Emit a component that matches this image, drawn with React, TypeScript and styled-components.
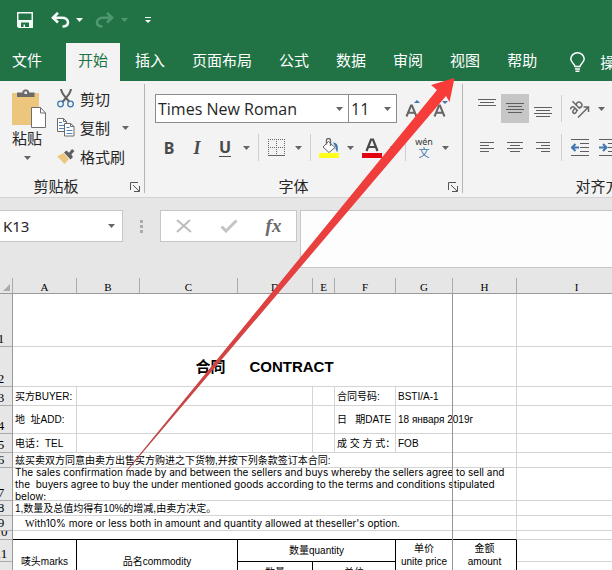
import React from "react";
import styled, { createGlobalStyle, css } from "styled-components";

const GlobalStyle = createGlobalStyle`
  *, *::before, *::after { box-sizing: border-box; }
  body { margin: 0; background: #fff; }
  button, select, input, textarea { font: inherit; color: inherit; border: 0; margin: 0; padding: 0; background: none; border-radius: 0; }
`;

const uiFont = `"Noto Sans", "Noto Sans CJK SC", sans-serif`;
const sheetFont = `"Liberation Sans", "Noto Sans CJK SC", sans-serif`;

const Window = styled.div`
  position: relative;
  display: flex;
  flex-direction: column;
  height: 100vh;
  overflow: hidden;
  background: #e6e6e6;
  font: 15px/20px ${uiFont};
  color: #262626;
`;

const TitleBar = styled.header`
  display: flex;
  align-items: center;
  flex: none;
  height: 43px;
  padding: 0 0 3px 17px;
  background: #217346;
  color: #f4fbf6;
`;

const QuickButton = styled.button<{ $space?: number; $dim?: boolean }>`
  display: flex;
  align-items: center;
  flex: none;
  margin-right: ${(p) => p.$space ?? 0}px;
  color: ${(p) => (p.$dim ? "#4f9770" : "inherit")};
`;

const TabBar = styled.nav`
  display: flex;
  flex: none;
  gap: 3px;
  height: 38px;
  background: #217346;
  white-space: nowrap;
`;

const Tab = styled.button<{ $active?: boolean; $file?: boolean }>`
  flex: none;
  padding: 0 12px 4px;
  margin-right: ${(p) => (p.$file ? 9 : 0)}px;
  color: ${(p) => (p.$active ? "#217346" : "#fff")};
  background: ${(p) => (p.$active ? "#f3f3f3" : "transparent")};
`;

const TellMe = styled.button`
  display: flex;
  align-items: center;
  flex: none;
  gap: 15px;
  padding: 0 0 0 18px;
  color: #fff;
`;

const Ribbon = styled.div`
  display: flex;
  flex: none;
  height: 117px;
  padding: 3px 0 4px;
  background: #f3f3f3;
  border-bottom: 1px solid #d2d2d2;
`;

const Group = styled.section<{ $pad: number; $width: number }>`
  display: flex;
  flex-direction: column;
  flex: none;
  width: ${(p) => p.$width}px;
  padding-left: ${(p) => p.$pad}px;
  border-right: 1px solid #b4b4b4;
`;

const GroupRows = styled.div`
  display: flex;
  flex-direction: column;
  flex: none;
  gap: 10px;
  height: 91px;
  padding-top: 10px;
`;

const ClipRows = styled.div`
  display: flex;
  flex: none;
  height: 91px;
`;

const GroupFoot = styled.footer`
  display: flex;
  align-items: center;
  flex: none;
  height: 22px;
  padding-right: 4px;
`;

const GroupName = styled.span<{ $inset?: number }>`
  flex: 1;
  padding-right: ${(p) => p.$inset ?? 0}px;
  text-align: center;
`;

const Row = styled.div<{ $gap?: number }>`
  display: flex;
  align-items: center;
  gap: ${(p) => p.$gap ?? 0}px;
  height: 29px;
`;

const PasteButton = styled.button`
  display: flex;
  flex-direction: column;
  align-items: center;
  width: 42px;
  margin-right: 9px;
  padding-top: 5px;
`;

const PasteLabel = styled.span`
  padding-bottom: 8px;
`;

const ClipColumn = styled.div`
  display: flex;
  flex-direction: column;
`;

const ClipButton = styled.button`
  display: flex;
  align-items: center;
  gap: 5px;
  height: 29px;
`;

const Caret = styled.button`
  display: flex;
  align-items: center;
  justify-content: center;
  flex: none;
  width: 15px;
  height: 29px;
`;

const Tool = styled.button<{ $on?: boolean }>`
  display: flex;
  align-items: center;
  justify-content: center;
  flex: none;
  width: 28px;
  height: 29px;
  background: ${(p) => (p.$on ? "#c6c6c6" : "transparent")};
`;

const Letter = styled.span<{ $kind: "b" | "i" | "u" }>`
  font: 700 16px/20px "Noto Sans", sans-serif;
  color: #4a4a4a;
  ${(p) => p.$kind === "i" && css`font-family: "Liberation Serif", serif; font-style: italic; font-size: 18px;`}
  ${(p) => p.$kind === "u" && css`line-height: 17px; border-bottom: 1px solid #4a4a4a;`}
`;

const Divider = styled.span`
  flex: none;
  width: 1px;
  height: 27px;
  margin: 0 4px;
  background: #cfcfcf;
`;

const ComboPair = styled.div`
  display: flex;
  flex: none;
  margin-right: 2px;
`;

const Combo = styled.label<{ $width: number }>`
  display: flex;
  align-items: center;
  flex: none;
  width: ${(p) => p.$width}px;
  height: 29px;
  padding: 0 5px 0 2px;
  border: 1px solid #8c8c8c;
  background: #fff;
  font: 16px/20px "Open Sans", sans-serif;

  & + & {
    border-left: 0;
  }
`;

const Select = styled.select`
  flex: 1;
  min-width: 0;
  appearance: none;
  outline: 0;
`;

const FormulaRow = styled.div`
  display: flex;
  align-items: flex-start;
  flex: none;
  height: 80px;
  padding-top: 12px;
`;

const NameBox = styled.label`
  display: flex;
  align-items: center;
  flex: none;
  width: 123px;
  height: 32px;
  padding: 0 7px 0 3px;
  border: 1px solid #c6c6c6;
  border-left: 0;
  background: #fff;
`;

const NameInput = styled.input`
  flex: 1;
  min-width: 0;
  outline: 0;
`;

const Grip = styled.span`
  display: flex;
  justify-content: center;
  align-items: center;
  flex: none;
  width: 37px;
  height: 32px;
`;

const FormulaTools = styled.div`
  display: flex;
  flex: none;
  width: 137px;
  height: 32px;
  margin-right: 3px;
  border: 1px solid #c6c6c6;
  background: #fff;
`;

const FormulaButton = styled.button`
  display: flex;
  flex: 1;
  align-items: center;
  justify-content: center;
`;

const FormulaInput = styled.textarea`
  flex: 1;
  min-width: 0;
  height: 58px;
  border: 1px solid #c6c6c6;
  border-right: 0;
  background: #fdfdfd;
  resize: none;
  outline: 0;
`;

const SheetArea = styled.main`
  position: relative;
  flex: 1;
  min-height: 0;
  overflow: hidden;
  background: #fff;
`;

const Sheet = styled.table`
  table-layout: fixed;
  border-collapse: separate;
  border-spacing: 0;
  width: 100%;
  min-width: 637px;
  font: 10px/13px ${sheetFont};
  color: #000;
`;

const Col = styled.col<{ $w?: number }>`
  width: ${(p) => (p.$w ? p.$w + "px" : "auto")};
`;

const ColHead = styled.th`
  height: 16px;
  padding: 3px 0 0;
  background: #e6e6e6;
  border-right: 1px solid #ababab;
  border-bottom: 1px solid #9a9a9a;
  font: 400 11px/12px "Liberation Serif", serif;
`;

const RowHead = styled.th`
  padding: 0;
  background: #e6e6e6;
  border-right: 1px solid #9a9a9a;
  border-bottom: 1px solid #ababab;
  vertical-align: bottom;
`;

const RowNumber = styled.span<{ $h: number }>`
  display: flex;
  align-items: flex-end;
  justify-content: center;
  width: 24px;
  height: ${(p) => p.$h - 1}px;
  margin-left: -11px;
  overflow: hidden;
  font: 400 13px/14px "Liberation Serif", serif;
`;

type Line = "grey" | "black";
const lineColor: Record<Line, string> = { grey: "#d4d4d4", black: "#000" };

const Cell = styled.td<{ $right?: Line; $bottom?: Line }>`
  padding: 0;
  border-right: 1px solid ${(p) => lineColor[p.$right ?? "grey"]};
  border-bottom: 1px solid ${(p) => lineColor[p.$bottom ?? "grey"]};
`;

const CellText = styled.div<{ $h: number; $center?: boolean; $prose?: boolean; $top?: boolean }>`
  display: flex;
  flex-direction: column;
  justify-content: ${(p) => (p.$top ? "flex-start" : "center")};
  height: ${(p) => p.$h - 1}px;
  padding: ${(p) => (p.$top ? 2 : 0)}px ${(p) => (p.$center ? 0 : 2)}px 0;
  overflow: hidden;
  white-space: pre;
  text-align: ${(p) => (p.$center ? "center" : "left")};
  ${(p) => p.$prose && css`font-family: Inter, sans-serif; line-height: 12px;`}
`;

const Title = styled.h1`
  display: flex;
  justify-content: center;
  gap: 24px;
  margin: 0;
  font: 700 15px/24px ${sheetFont};
`;

const Serif = styled.span`
  padding-left: 10px;
  font-family: "Liberation Serif", serif;
`;

const PageBreak = styled.div`
  position: absolute;
  top: 16px;
  bottom: 0;
  left: 452px;
  width: 1px;
  background: #959595;
`;

const Pointer = styled.svg`
  position: absolute;
  top: 0;
  left: 0;
  pointer-events: none;
`;

const Down = ({ color = "#666" }: { color?: string }) => (
  <svg width="7" height="4" viewBox="0 0 7 4"><path d="M0 0h7L3.500 4z" fill={color} /></svg>
);

const Launcher = () => (
  <svg width="10" height="10" viewBox="0 0 10 10" fill="none" stroke="#555">
    <path d="M.5 8V.5H8M3 3l6 6M9.500 4v5.500H4" />
  </svg>
);

const SaveIcon = () => (
  <svg width="17" height="17" viewBox="0 0 17 17">
    <path fillRule="evenodd" fill="currentColor" d="M0 0h16v16H1.500L0 14.500zM1.500 1.500v6.500h13V1.500zM4 10.500V15h2.500v-2.500H8V15h4v-4.500z" />
  </svg>
);

const UndoIcon = () => (
  <svg width="19" height="16" viewBox="0 0 19 16" fill="none" stroke="currentColor" strokeWidth="2.600">
    <path d="M7 .8 2 5.700l5 4.800M2.500 5.700h8.500c3.500 0 6 1.800 6 4.500s-2 4.300-5.500 4.300" />
  </svg>
);

const RedoIcon = () => (
  <svg width="19" height="16" viewBox="0 0 19 16" fill="none" stroke="currentColor" strokeWidth="2.600">
    <path d="m12 .8 5 4.900-5 4.800M16.500 5.700H8c-3.500 0-6 1.800-6 4.500s2 4.300 5.500 4.300" />
  </svg>
);

const CustomizeIcon = () => (
  <svg width="6" height="6" viewBox="0 0 6 6" fill="currentColor"><path d="M0 0h6v1H0zM0 3h6L3 6z" /></svg>
);

const BulbIcon = () => (
  <svg width="15" height="21" viewBox="0 0 15 21" fill="none" stroke="currentColor" strokeWidth="1.500">
    <path d="M5 14.500c0-2.500-4.200-4-4.200-7.500a6.700 6.200 0 0 1 13.400 0c0 3.500-4.200 5-4.200 7.500zM5 17h5M5.500 19.300h4" />
  </svg>
);

const PasteIcon = () => (
  <svg width="38" height="39" viewBox="-4 0 38 39">
    <path d="M0 4h27v32H0z" fill="#ecc67c" />
    <path d="M5 3.500h5.500V2l2-1.500h2.500L17 2v1.500h5.500V8H5z" fill="#6a6a6a" />
    <path d="M12.500 2.500H15V5h-2.500z" fill="#f3f3f3" />
    <path d="M19.500 18.500h9l5 5.500v14.500h-14z" fill="#fff" stroke="#6f6f6f" />
    <path d="M28.500 18.500V24h5" fill="none" stroke="#6f6f6f" />
  </svg>
);

const CutIcon = () => (
  <svg width="18" height="19" viewBox="0 0 18 19" fill="none">
    <path d="M4 0c.3 3 1 4.500 5.500 9.500L12.500 13M14 0c-.3 3-1 4.500-5.500 9.500L5.500 13" stroke="#5f5f5f" strokeWidth="2" />
    <circle cx="3.500" cy="15" r="2.800" stroke="#3f77ae" strokeWidth="1.300" />
    <circle cx="13.500" cy="15" r="2.800" stroke="#3f77ae" strokeWidth="1.300" />
  </svg>
);

const CopyIcon = () => (
  <svg width="18" height="19" viewBox="0 0 18 19" fill="#fff" stroke="#6a6a6a">
    <path d="M.5.5h6l3 3v10h-9zM6.500.5v3h3" />
    <path d="M2 4.500h3M2 7.500h6M2 10.500h6" stroke="#4f87b8" />
    <path d="M7.500 5.500h6l3.500 3v9.500H7.500zM13.500 5.500v3H17" />
    <path d="M9.500 9.500h3M9.500 12.500h6M9.500 15.500h6" stroke="#4f87b8" />
  </svg>
);

const BrushIcon = () => (
  <svg width="18" height="15" viewBox="0 0 18 15">
    <path d="M0 7.500 6.500 4l5.500 6-4.500 5C5 12 3 10 0 7.500z" fill="#ecc67c" />
    <path d="m7 3.500 2.500-2 2.500 2.200L15 0l2.500 2-3.200 3.500L16 8l-2.500 2.500z" fill="#5f5f5f" />
  </svg>
);

const GrowIcon = ({ down }: { down?: boolean }) => (
  <svg width="16" height="20" viewBox="0 0 16 20">
    <path d="M1.500 17.500 6 6.500h1l4.500 11M3.300 13.700h6.400" fill="none" stroke="#666" strokeWidth="2" />
    <path d={down ? "M9 2h6l-3 3z" : "M9 4h6l-3-3z"} fill="#3f77ae" />
  </svg>
);

const BorderIcon = () => (
  <svg width="18" height="18" viewBox="0 0 18 18" fill="none" stroke="#666">
    <path d="M0 .5h17M0 8.500h17M.5 0v16M8.500 0v16M16.500 0v16" strokeDasharray="1 1" />
    <path d="M0 16.500h17" />
  </svg>
);

const FillIcon = () => (
  <svg width="20" height="20" viewBox="0 0 20 20">
    <path d="M0 15h20v5H0z" fill="#ffff1a" />
    <path d="m9.500 3.500 6.500 6-6 5-6-5.500z" fill="#fff" stroke="#666" />
    <path d="M7.500 6.500V2c0-2 4-2 4 0v6" fill="none" stroke="#666" strokeWidth="1.300" />
    <path d="M14 4.500c4.500 0 5.500 3.500 4.500 9.500-1.500-1-2-2.500-2-5z" fill="#3f77ae" />
  </svg>
);

const FontColorIcon = () => (
  <svg width="20" height="20" viewBox="0 0 20 20">
    <path d="M0 15h20v5H0z" fill="#e3000f" />
    <path d="M4.500 13 9 1.500h2L15.500 13M6 9h8" fill="none" stroke="#4a4a4a" strokeWidth="2.200" />
  </svg>
);

const Phonetic = styled.span`
  display: flex;
  flex-direction: column;
  align-items: center;
  font-size: 9px;
  line-height: 10px;
  color: #333;
`;

const PhoneticBase = styled.span`
  color: #3f77ae;
  font-size: 11px;
  line-height: 12px;
`;

const Lines = ({ rows }: { rows: [number, number, number][] }) => (
  <svg width="18" height="21" viewBox="0 0 18 21" stroke="#5f5f5f">
    {rows.map(([x, y, w]) => <path key={y} d={`M${x} ${y}.5h${w}`} />)}
  </svg>
);

const OrientIcon = () => (
  <svg width="20" height="20" viewBox="0 0 20 20" fill="none" stroke="#666" strokeWidth="1.500">
    <g transform="translate(-1 -1) rotate(-45 7 9)">
      <path d="M1.500 7c1-1.500 4-1.200 4 .8V13M5.500 9.300c-2-.2-4.500 0-4.500 2s3 2.200 4.500 0M8.500 2.500V13M8.500 8.300c1-2.200 4.800-2 4.800 1.400s-3.800 3.600-4.800 1.400" />
    </g>
    <path d="M8 18.500 18 8.500M13.500 8H18.500v5" />
  </svg>
);

const IndentIcon = ({ right }: { right?: boolean }) => (
  <svg width="18" height="17" viewBox="0 0 18 17" fill="none" stroke="#5f5f5f">
    <path d="M0 .5h18M9 4.500h9M9 8.500h9M9 12.500h9M0 16.500h18" />
    <path d={right ? "M0 8.500h6M4 5l3.500 3.500L4 12" : "M2 8.500h6M4.500 5 1 8.500 4.500 12"} stroke="#3f77ae" strokeWidth="2" />
  </svg>
);

const GripIcon = () => (
  <svg width="3" height="13" viewBox="0 0 3 13" fill="#ababab"><path d="M0 0h3v3H0zM0 5h3v3H0zM0 10h3v3H0z" /></svg>
);

const CancelIcon = () => (
  <svg width="16" height="14" viewBox="0 0 16 14" stroke="#bdbdbd" strokeWidth="2"><path d="m1 1 14 12M14 1 1 13" /></svg>
);

const AcceptIcon = () => (
  <svg width="18" height="14" viewBox="0 0 18 14" fill="none" stroke="#c4c4c4" strokeWidth="3"><path d="m1.500 7.500 4.500 4.500L16.500 1.500" /></svg>
);

const Fx = styled.span`
  font: italic 700 19px/24px "Liberation Serif", serif;
  color: #6a6a6a;
`;

const SelectAll = () => (
  <svg width="7" height="7" viewBox="0 0 7 7"><path d="M7 0v7H0z" fill="#ababab" /></svg>
);

const tabs = ["插入", "页面布局", "公式", "数据", "审阅", "视图", "帮助"];
const columns: [string, number?][] = [["A", 64], ["B", 63], ["C", 98], ["D", 75], ["E", 22], ["F", 61], ["G", 57], ["H", 64], ["I"]];

const Head = ({ n, h }: { n: number; h: number }) => (
  <RowHead scope="row"><RowNumber $h={h}>{n}</RowNumber></RowHead>
);

const InfoRow = ({ n, h, label, name, value }: { n: number; h: number; label: string; name: string; value: string }) => (
  <tr>
    <Head n={n} h={h} />
    <Cell><CellText $h={h}>{label}</CellText></Cell>
    <Cell colSpan={3} />
    <Cell />
    <Cell><CellText $h={h}>{name}</CellText></Cell>
    <Cell colSpan={2}><CellText $h={h}>{value}</CellText></Cell>
    <Cell />
  </tr>
);

const WideRow = ({ n, h, prose, bottom, children }: { n: number; h: number; prose?: boolean; bottom?: Line; children?: React.ReactNode }) => (
  <tr>
    <Head n={n} h={h} />
    <Cell colSpan={8} $bottom={bottom}><CellText $h={h} $prose={prose}>{children}</CellText></Cell>
    <Cell />
  </tr>
);

export default function App() {
  return (
    <Window>
      <GlobalStyle />
      <TitleBar>
        <QuickButton aria-label="保存" $space={17}><SaveIcon /></QuickButton>
        <QuickButton aria-label="撤消" $space={6}><UndoIcon /></QuickButton>
        <QuickButton aria-label="撤消列表" $space={12}><Down color="#f4fbf6" /></QuickButton>
        <QuickButton aria-label="恢复" $space={7} $dim><RedoIcon /></QuickButton>
        <QuickButton aria-label="恢复列表" $space={17} $dim><Down color="#4f9770" /></QuickButton>
        <QuickButton aria-label="自定义"><CustomizeIcon /></QuickButton>
      </TitleBar>
      <TabBar>
        <Tab $file>文件</Tab>
        <Tab $active>开始</Tab>
        {tabs.map((t) => <Tab key={t}>{t}</Tab>)}
        <TellMe><BulbIcon />操作说明搜索</TellMe>
      </TabBar>
      <Ribbon>
        <Group $pad={6} $width={145}>
          <ClipRows>
            <PasteButton><PasteIcon /><PasteLabel>粘贴</PasteLabel><Down /></PasteButton>
            <ClipColumn>
              <ClipButton><CutIcon />剪切</ClipButton>
              <Row $gap={8}><ClipButton><CopyIcon />复制</ClipButton><Caret aria-label="复制选项"><Down /></Caret></Row>
              <ClipButton><BrushIcon />格式刷</ClipButton>
            </ClipColumn>
          </ClipRows>
          <GroupFoot><GroupName $inset={24}>剪贴板</GroupName><button aria-label="剪贴板设置"><Launcher /></button></GroupFoot>
        </Group>
        <Group $pad={10} $width={318}>
          <GroupRows>
            <Row>
              <ComboPair>
                <Combo $width={194}>
                  <Select aria-label="字体"><option>Times New Roman</option></Select><Down />
                </Combo>
                <Combo $width={48}>
                  <Select aria-label="字号"><option>11</option></Select><Down />
                </Combo>
              </ComboPair>
              <Tool aria-label="增大字号"><GrowIcon /></Tool>
              <Tool aria-label="减小字号"><GrowIcon down /></Tool>
            </Row>
            <Row>
              <Tool><Letter $kind="b">B</Letter></Tool>
              <Tool><Letter $kind="i">I</Letter></Tool>
              <Tool><Letter $kind="u">U</Letter></Tool>
              <Caret aria-label="下划线选项"><Down /></Caret>
              <Divider />
              <Tool aria-label="边框"><BorderIcon /></Tool>
              <Caret aria-label="边框选项"><Down /></Caret>
              <Divider />
              <Tool aria-label="填充颜色"><FillIcon /></Tool>
              <Caret aria-label="填充颜色选项"><Down /></Caret>
              <Tool aria-label="字体颜色"><FontColorIcon /></Tool>
              <Caret aria-label="字体颜色选项"><Down /></Caret>
              <Divider />
              <Tool><Phonetic>wén<PhoneticBase>文</PhoneticBase></Phonetic></Tool>
              <Caret aria-label="拼音选项"><Down /></Caret>
            </Row>
          </GroupRows>
          <GroupFoot><GroupName $inset={16}>字体</GroupName><button aria-label="字体设置"><Launcher /></button></GroupFoot>
        </Group>
        <Group $pad={10} $width={280}>
          <GroupRows>
            <Row>
              <Tool aria-label="顶端对齐"><Lines rows={[[0, 1, 18], [2, 4, 14], [0, 7, 18]]} /></Tool>
              <Tool aria-label="垂直居中" $on><Lines rows={[[0, 5, 18], [2, 8, 14], [0, 11, 18], [2, 14, 14]]} /></Tool>
              <Tool aria-label="底端对齐"><Lines rows={[[0, 9, 18], [2, 12, 14], [0, 15, 18], [2, 18, 14]]} /></Tool>
              <Divider />
              <Tool aria-label="方向"><OrientIcon /></Tool>
              <Caret aria-label="方向选项"><Down /></Caret>
            </Row>
            <Row>
              <Tool aria-label="左对齐"><Lines rows={[[2, 5, 14], [2, 8, 9], [2, 11, 14], [2, 14, 9]]} /></Tool>
              <Tool aria-label="居中"><Lines rows={[[1, 5, 16], [4, 8, 10], [1, 11, 16], [4, 14, 10]]} /></Tool>
              <Tool aria-label="右对齐"><Lines rows={[[2, 5, 14], [7, 8, 9], [2, 11, 14], [7, 14, 9]]} /></Tool>
              <Divider />
              <Tool aria-label="减少缩进量"><IndentIcon /></Tool>
              <Tool aria-label="增加缩进量"><IndentIcon right /></Tool>
            </Row>
          </GroupRows>
          <GroupFoot><GroupName>对齐方式</GroupName></GroupFoot>
        </Group>
      </Ribbon>
      <FormulaRow>
        <NameBox><NameInput aria-label="名称框" defaultValue="K13" /><Down /></NameBox>
        <Grip><GripIcon /></Grip>
        <FormulaTools>
          <FormulaButton aria-label="取消"><CancelIcon /></FormulaButton>
          <FormulaButton aria-label="输入"><AcceptIcon /></FormulaButton>
          <FormulaButton><Fx>fx</Fx></FormulaButton>
        </FormulaTools>
        <FormulaInput aria-label="编辑栏" />
      </FormulaRow>
      <SheetArea>
        <Sheet>
          <colgroup>
            <Col $w={13} />
            {columns.map(([c, w]) => <Col key={c} $w={w} />)}
          </colgroup>
          <thead>
            <tr>
              <ColHead><SelectAll /></ColHead>
              {columns.map(([c]) => <ColHead key={c} scope="col">{c}</ColHead>)}
            </tr>
          </thead>
          <tbody>
            <WideRow n={1} h={53} />
            <tr>
              <Head n={2} h={40} />
              <Cell colSpan={8}>
                <CellText $h={40} $center><Title><span>合同</span><span>CONTRACT</span></Title></CellText>
              </Cell>
              <Cell />
            </tr>
            <InfoRow n={3} h={19} label="买方BUYER:" name="合同号码:" value="BSTI/A-1" />
            <InfoRow n={4} h={28} label="地  址ADD:" name="日   期DATE" value="18 января 2019г" />
            <InfoRow n={5} h={19} label="电话：TEL" name="成 交 方 式：" value="FOB" />
            <WideRow n={6} h={15}>兹买卖双方同意由卖方出售买方购进之下货物,并按下列条款签订本合同:</WideRow>
            <WideRow n={7} h={33} prose>
              {"The sales confirmation made by and between the sellers and buys whereby the sellers agree to sell and\nthe  buyers agree to buy the under mentioned goods according to the terms and conditions stipulated\nbelow:"}
            </WideRow>
            <WideRow n={8} h={15}>1,数量及总值均得有10%的增减,由卖方决定。</WideRow>
            <WideRow n={9} h={15} prose><span><Serif>W</Serif>ith10% more or less both in amount and quantity allowed at theseller's option.</span></WideRow>
            <WideRow n={10} h={9} bottom="black" />
            <tr>
              <Head n={11} h={22} />
              <Cell rowSpan={2} $right="black"><CellText $h={44} $center>唛头marks</CellText></Cell>
              <Cell rowSpan={2} colSpan={2} $right="black"><CellText $h={44} $center>品名commodity</CellText></Cell>
              <Cell colSpan={3} $right="black" $bottom="black"><CellText $h={22} $center>数量quantity</CellText></Cell>
              <Cell rowSpan={2}><CellText $h={44} $center $top>{"单价\nunite price"}</CellText></Cell>
              <Cell rowSpan={2} $right="black"><CellText $h={44} $center $top>{"金额\namount"}</CellText></Cell>
              <Cell />
            </tr>
            <tr>
              <Head n={12} h={22} />
              <Cell $right="black"><CellText $h={22} $center>数量</CellText></Cell>
              <Cell colSpan={2} $right="black"><CellText $h={22} $center>单位</CellText></Cell>
              <Cell />
            </tr>
          </tbody>
        </Sheet>
        <PageBreak />
      </SheetArea>
      <Pointer width="612" height="570" viewBox="0 0 612 570">
        <defs>
          <linearGradient id="shaft" gradientUnits="userSpaceOnUse" x1="127" y1="471" x2="454" y2="78">
            <stop offset="0" stopColor="#b84848" />
            <stop offset="0.500" stopColor="#e44140" />
            <stop offset="1" stopColor="#fa3b38" />
          </linearGradient>
        </defs>
        <path d="M126 471 437 90l-6-5 23.500-7-5 24-3.500-6L127 471z" fill="url(#shaft)" />
      </Pointer>
    </Window>
  );
}
